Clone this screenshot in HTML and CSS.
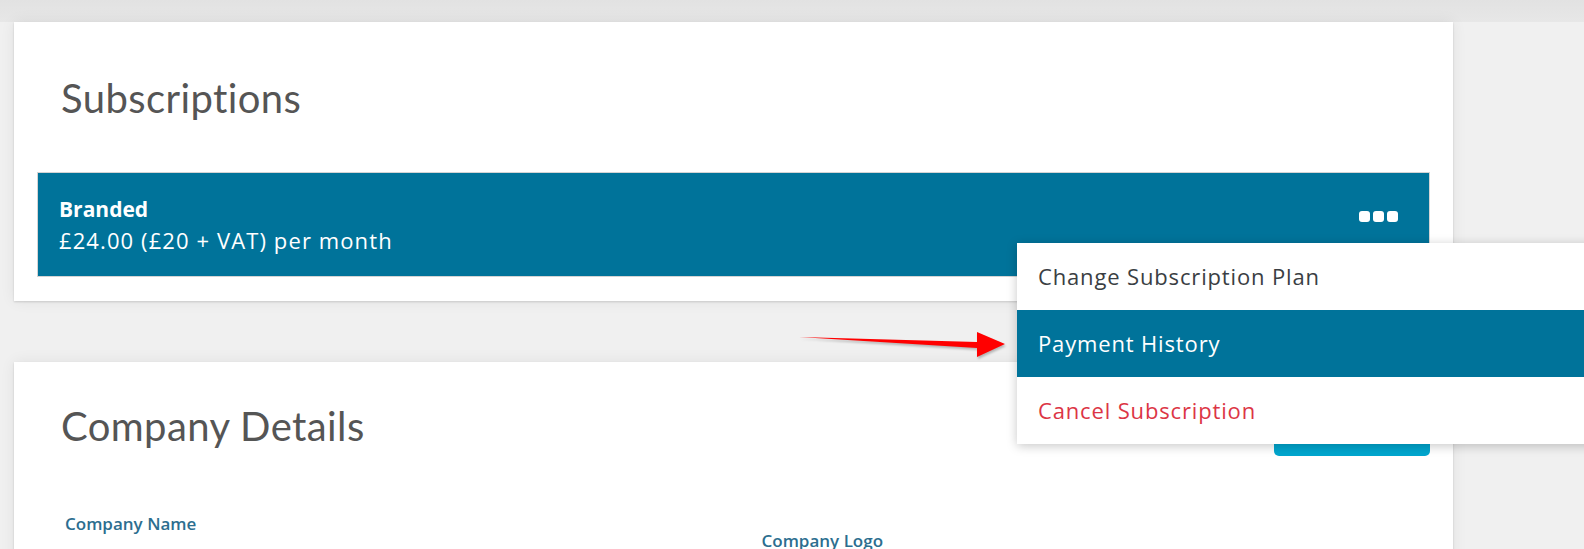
FILE: index.html
```html
<!DOCTYPE html>
<html lang="en">
<head>
    <meta charset="UTF-8">
    <meta name="viewport" content="width=device-width, initial-scale=1.0">
    <title>Account - Subscriptions</title>
    <link rel="stylesheet" href="styles.css">
</head>
<body>
    <main class="page">
        <!-- Subscriptions -->
        <section class="card">
            <h2 class="card-title">Subscriptions</h2>
            <div class="plan">
                <div class="plan-info">
                    <div class="plan-name">Branded</div>
                    <div class="plan-price">£24.00 (£20 + VAT) per month</div>
                </div>
                <button type="button" class="plan-menu-btn" aria-label="Options">
                    <span></span><span></span><span></span>
                </button>
                <ul class="plan-menu">
                    <li>Change Subscription Plan</li>
                    <li class="active">Payment History</li>
                    <li class="danger">Cancel Subscription</li>
                </ul>
            </div>
        </section>

        <!-- Company details -->
        <section class="card card-company">
            <div class="card-head">
                <h2 class="card-title">Company Details</h2>
                <button type="button" class="btn-edit">Edit</button>
            </div>
            <div class="fields">
                <div class="field">
                    <label>Company Name</label>
                </div>
                <div class="field field-logo">
                    <label>Company Logo</label>
                </div>
            </div>
        </section>

        <!-- annotation arrow -->
        <svg class="pointer" width="220" height="34" viewBox="0 0 220 34">
            <path d="M4 7 L182 12 L182 2 L210 14 L182 27 L182 18 Z" fill="#ff0000"/>
        </svg>
    </main>
</body>
</html>
```

FILE: styles.css
```css
body {
    margin: 0;
    padding: 0;
    font-family: "Open Sans", sans-serif;
    background: linear-gradient(#e2e2e2, #e7e7e7 22px, #f0f0f0 22px);
    background-color: #f0f0f0;
    min-height: 549px;
    overflow: hidden;
}

.page {
    position: relative;
    width: 1439px;
    padding: 22px 0 0 14px;
}

.card {
    background: #ffffff;
    padding: 23px 23px 24px;
    box-shadow: 0 0 14px rgba(0, 0, 0, 0.07), 0 1px 2px rgba(0, 0, 0, 0.14);
}

.card-title {
    margin: 0;
    padding: 29px 0 0 24px;
    height: 127px;
    box-sizing: border-box;
    font-family: Lato, sans-serif;
    font-weight: 400;
    font-size: 40px;
    line-height: 48px;
    letter-spacing: 0.4px;
    color: #555555;
}

.plan {
    position: relative;
    display: flex;
    justify-content: space-between;
    align-items: flex-start;
    background-color: #00739a;
    border: 1px solid #d4d4d4;
    padding: 21px 31px 20px 21px;
    color: #ffffff;
}

.plan-name {
    font-weight: 700;
    font-size: 21px;
    line-height: 31px;
}

.plan-price {
    font-size: 22px;
    line-height: 31px;
    letter-spacing: 1.1px;
}

.plan-menu-btn {
    display: flex;
    gap: 3px;
    margin-top: 17px;
    padding: 0;
    border: none;
    background: none;
    cursor: pointer;
}

.plan-menu-btn span {
    display: block;
    width: 11px;
    height: 11px;
    border-radius: 3px;
    background-color: #ffffff;
}

.plan-menu {
    position: absolute;
    left: 979px;
    top: 70px;
    width: 620px;
    margin: 0;
    padding: 0;
    list-style: none;
    background: #ffffff;
    box-shadow: 0 2px 10px rgba(0, 0, 0, 0.22);
    z-index: 5;
}

.plan-menu li {
    height: 67px;
    padding-left: 21px;
    font-size: 22px;
    line-height: 67px;
    letter-spacing: 0.85px;
    color: #3a3e43;
}

.plan-menu li.active {
    background-color: #00739a;
    color: #ffffff;
}

.plan-menu li.danger {
    color: #dc3545;
}

.card-company {
    margin-top: 61px;
    height: 200px;
}

.card-head {
    display: flex;
    justify-content: space-between;
    align-items: flex-start;
}

.card-company .card-title {
    padding-top: 17px;
    height: 129px;
}

.btn-edit {
    margin-top: 31px;
    width: 156px;
    height: 40px;
    border: none;
    border-radius: 5px;
    background-color: #00a6ce;
    color: #ffffff;
    font-size: 16px;
}

.fields {
    display: grid;
    grid-template-columns: 1fr 1fr;
}

.field label {
    display: block;
    padding-left: 28px;
    font-weight: 600;
    font-size: 17px;
    line-height: 19px;
    color: #2c6e8f;
}

.field-logo {
    padding-top: 17px;
}

.pointer {
    position: absolute;
    left: 795px;
    top: 330px;
    filter: drop-shadow(1px 2px 1px rgba(0, 0, 0, 0.25));
}
```
